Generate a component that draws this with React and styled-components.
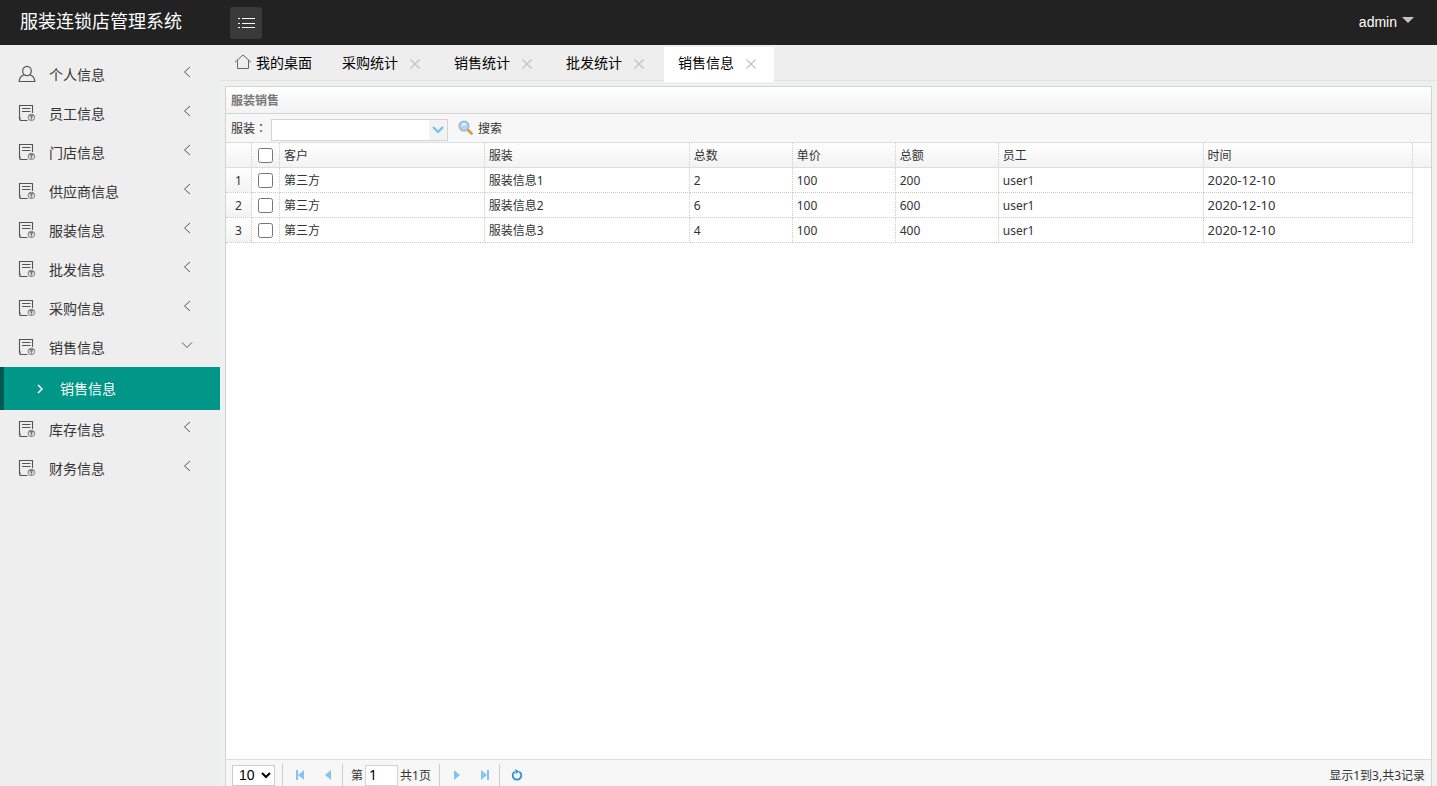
import React, { useState } from 'react';
import styled, { createGlobalStyle, css } from 'styled-components';

const menus = [
  { name: '个人信息', icon: 'user' },
  { name: '员工信息' },
  { name: '门店信息' },
  { name: '供应商信息' },
  { name: '服装信息' },
  { name: '批发信息' },
  { name: '采购信息' },
  { name: '销售信息', children: ['销售信息'] },
  { name: '库存信息' },
  { name: '财务信息' },
];

const tabs = ['采购统计', '销售统计', '批发统计', '销售信息'];

const rows = [
  { customer: '第三方', clothes: '服装信息1', count: 2, price: 100, total: 200, staff: 'user1', date: '2020-12-10' },
  { customer: '第三方', clothes: '服装信息2', count: 6, price: 100, total: 600, staff: 'user1', date: '2020-12-10' },
  { customer: '第三方', clothes: '服装信息3', count: 4, price: 100, total: 400, staff: 'user1', date: '2020-12-10' },
];

const UserIcon = () => (
  <svg width="18" height="18" viewBox="0 0 18 18" fill="none" stroke="#555" strokeWidth="1.2">
    <ellipse cx="9" cy="6" rx="4.3" ry="4.7" />
    <path d="M6.2 9.8C3 10.8 1.4 13 1.2 16.5H16.8C16.6 13 15 10.8 11.8 9.8" />
  </svg>
);

const FileIcon = () => (
  <svg width="18" height="18" viewBox="0 0 18 18" fill="none" stroke="#555" strokeWidth="1.1">
    <path d="M9.5 16.5H3.5Q1.5 16.5 1.5 14.5V1.5H14.5V9" />
    <path d="M4 4.5H12.5M4 7.5H12.5" />
    <path d="M1.5 14H3" strokeWidth="0.8" />
    <ellipse cx="13.4" cy="13.4" rx="3.3" ry="3.1" strokeWidth="1" stroke="#777" />
    <path d="M11.4 11.5H15.4M11.6 13H15.2M13.4 12V15.8" strokeWidth="1" stroke="#777" />
  </svg>
);

const HomeIcon = () => (
  <svg width="18" height="16" viewBox="0 0 18 16" fill="none" stroke="#666" strokeWidth="1">
    <path d="M1 8.2L9 1L17 8.2M3.5 6.2V14.5H14.5V6.2" />
  </svg>
);

const ListIcon = () => (
  <svg width="18" height="12" viewBox="0 0 18 12" stroke="#fff" strokeWidth="1">
    <path d="M1 1.5H3M5 1.5H18M1 6.5H3M5 6.5H18M1 10.5H3M5 10.5H18" />
  </svg>
);

const Angle = ({ open }) => (
  <svg width="12" height="12" viewBox="0 0 12 12" fill="none" stroke="#555" strokeWidth="1">
    <path d={open ? 'M1 3.5L6 8.5L11 3.5' : 'M9 1L3.5 6L9 11'} />
  </svg>
);

const SearchIcon = () => (
  <svg width="16" height="16" viewBox="0 0 16 16">
    <path d="M10 10L13.6 13.4" stroke="#e09a3e" strokeWidth="2.8" strokeLinecap="round" />
    <path d="M9 9L10.5 10.5" stroke="#999" strokeWidth="1.5" />
    <circle cx="6" cy="6" r="4.9" fill="#a9d5fa" stroke="#a5b0ba" strokeWidth="1.2" />
    <path d="M3.2 5.6A3 3 0 0 1 8.4 4.2Q6.5 6.2 3.2 5.6Z" fill="#e6f4ff" />
  </svg>
);

const pageIcons = {
  first: 'M1 1H3V11H1ZM9 1V11L3 6Z',
  prev: 'M8 1V11L2 6Z',
  next: 'M2 1V11L8 6Z',
  last: 'M1 1V11L7 6ZM7 1H9V11H7Z',
};

const PageButton = ({ type, label }) => (
  <IconButton type="button" aria-label={label}>
    <svg width="10" height="12" viewBox="0 0 10 12" fill="#85c4f0">
      <path d={pageIcons[type]} />
    </svg>
  </IconButton>
);

export default function App() {
  const [page, setPage] = useState('1');
  const [checked, setChecked] = useState([]);

  const toggle = (i) => {
    setChecked(checked.includes(i) ? checked.filter((n) => n !== i) : [...checked, i]);
  };

  const toggleAll = () => {
    setChecked(checked.length === rows.length ? [] : rows.map((_, i) => i));
  };

  return (
    <Page>
      <GlobalStyle />
      <Header>
        <Logo href="#">服装连锁店管理系统</Logo>
        <MenuToggle type="button" aria-label="菜单"><ListIcon /></MenuToggle>
        <Account type="button">admin<Caret /></Account>
      </Header>
      <Body>
        <Sidebar>
          {menus.map((menu) => (
            <React.Fragment key={menu.name}>
              <MenuItem href="#">
                {menu.icon === 'user' ? <UserIcon /> : <FileIcon />}
                <MenuName>{menu.name}</MenuName>
                <MenuArrow><Angle open={!!menu.children} /></MenuArrow>
              </MenuItem>
              {menu.children && menu.children.map((child) => (
                <SubItem href="#" key={child}>
                  <svg width="8" height="10" viewBox="0 0 8 10" fill="none" stroke="#fff" strokeWidth="1.5">
                    <path d="M2 1L6 5L2 9" />
                  </svg>
                  <SubName>{child}</SubName>
                </SubItem>
              ))}
            </React.Fragment>
          ))}
        </Sidebar>
        <Main>
          <TabBar>
            <HomeTab href="#"><HomeIcon />我的桌面</HomeTab>
            {tabs.map((tab, i) => (
              <Tab key={tab} $active={i === tabs.length - 1}>
                <TabLink href="#">{tab}</TabLink>
                <TabClose type="button" aria-label={'关闭' + tab}>
                  <svg width="10" height="10" viewBox="0 0 10 10" stroke="#c2c2c2" strokeWidth="1.1">
                    <path d="M0.5 0.5L9.5 9.5M9.5 0.5L0.5 9.5" />
                  </svg>
                </TabClose>
              </Tab>
            ))}
          </TabBar>
          <Panel>
            <PanelTitle>服装销售</PanelTitle>
            <Toolbar>
              <label htmlFor="clothes">服装<Colon>：</Colon></label>
              <Combo>
                <ComboSelect id="clothes" defaultValue="">
                  <option value=""></option>
                  {rows.map((row) => <option key={row.clothes}>{row.clothes}</option>)}
                </ComboSelect>
                <ComboArrow>
                  <svg width="12" height="8" viewBox="0 0 12 8" fill="none" stroke="#70bff2" strokeWidth="2.2">
                    <path d="M1 1L6 6L11 1" />
                  </svg>
                </ComboArrow>
              </Combo>
              <SearchButton type="button"><SearchIcon />搜索</SearchButton>
            </Toolbar>
            <GridView>
              <Grid>
                <colgroup>
                  <Col $width="26px" />
                  <Col $width="28px" />
                  <Col $width="17%" />
                  <Col $width="17%" />
                  <Col $width="8.55%" />
                  <Col $width="8.55%" />
                  <Col $width="8.55%" />
                  <Col $width="17%" />
                  <Col />
                  <Col $width="18px" />
                </colgroup>
                <thead>
                  <tr>
                    <Th></Th>
                    <Th $center>
                      <Checkbox aria-label="全选" checked={checked.length === rows.length} onChange={toggleAll} />
                    </Th>
                    <Th>客户</Th>
                    <Th>服装</Th>
                    <Th>总数</Th>
                    <Th>单价</Th>
                    <Th>总额</Th>
                    <Th>员工</Th>
                    <Th>时间</Th>
                    <Th $blank></Th>
                  </tr>
                </thead>
                <tbody>
                  {rows.map((row, i) => (
                    <tr key={row.clothes}>
                      <NumberTd>{i + 1}</NumberTd>
                      <Td $center>
                        <Checkbox aria-label={row.clothes} checked={checked.includes(i)} onChange={() => toggle(i)} />
                      </Td>
                      <Td>{row.customer}</Td>
                      <Td>{row.clothes}</Td>
                      <Td>{row.count}</Td>
                      <Td>{row.price}</Td>
                      <Td>{row.total}</Td>
                      <Td>{row.staff}</Td>
                      <DateTd>{row.date}</DateTd>
                      <td></td>
                    </tr>
                  ))}
                </tbody>
              </Grid>
            </GridView>
            <Pager>
              <PageSize aria-label="每页记录数" defaultValue="10">
                <option>10</option>
                <option>20</option>
                <option>50</option>
              </PageSize>
              <Separator />
              <PageButton type="first" label="首页" />
              <PageButton type="prev" label="上一页" />
              <Separator />
              <PageLabel htmlFor="page">第</PageLabel>
              <PageInput id="page" value={page} onChange={(e) => setPage(e.target.value)} />
              <PageCount>共1页</PageCount>
              <Separator />
              <PageButton type="next" label="下一页" />
              <PageButton type="last" label="尾页" />
              <Separator />
              <IconButton type="button" aria-label="刷新">
                <svg width="12" height="12" viewBox="0 0 12 12">
                  <path d="M8.2 2.7A4.3 4.3 0 1 1 3.8 2.7" fill="none" stroke="#2a8fdc" strokeWidth="1.8" />
                  <path d="M4.2 0L8.2 2.4L4.8 5Z" fill="#2a8fdc" />
                </svg>
              </IconButton>
              <PagerInfo>显示1到3,共3记录</PagerInfo>
            </Pager>
          </Panel>
        </Main>
      </Body>
    </Page>
  );
}

const GlobalStyle = createGlobalStyle`
  * {
    box-sizing: border-box;
  }
  body {
    margin: 0;
    font-family: "Liberation Sans", "Noto Sans CJK SC", sans-serif;
    font-size: 14px;
    color: #333;
  }
  a {
    color: inherit;
    text-decoration: none;
  }
  button, input, select {
    font-family: inherit;
  }
  button {
    border: none;
    padding: 0;
    background: none;
    cursor: pointer;
  }
  svg {
    display: block;
    flex-shrink: 0;
  }
`;

const Page = styled.div`
  display: flex;
  flex-direction: column;
  height: 100vh;
  overflow: hidden;
`;

const Header = styled.header`
  display: flex;
  align-items: center;
  flex-shrink: 0;
  height: 45px;
  padding: 0 23px 0 20px;
  background: #222;
  color: #fff;
`;

const Logo = styled.a`
  width: 210px;
  padding-bottom: 1px;
  font-size: 18px;
  line-height: 26px;
`;

const MenuToggle = styled.button`
  display: flex;
  align-items: center;
  justify-content: center;
  width: 32px;
  height: 32px;
  border-radius: 3px;
  background: #393939;
`;

const Account = styled.button`
  display: flex;
  align-items: center;
  gap: 5px;
  margin-left: auto;
  padding-bottom: 2px;
  color: #fff;
  font-size: 14px;
`;

const Caret = styled.span`
  margin-bottom: 4px;
  border: 6px solid transparent;
  border-top-color: #c2c2c2;
  border-bottom: none;
`;

const Body = styled.div`
  display: flex;
  flex: 1;
  min-height: 0;
`;

const Sidebar = styled.nav`
  flex-shrink: 0;
  width: 220px;
  padding-top: 10px;
  background: #eee;
`;

const MenuItem = styled.a`
  display: flex;
  align-items: center;
  height: 39px;
  padding: 0 27px 2px 18px;
`;

const MenuName = styled.span`
  flex: 1;
  padding-left: 13px;
`;

const MenuArrow = styled.span`
  padding-bottom: 4px;
`;

const SubItem = styled.a`
  display: flex;
  align-items: center;
  gap: 16px;
  height: 43px;
  padding-left: 32px;
  border-left: 4px solid #005a52;
  background: #009688;
  color: #fff;
`;

const SubName = styled.span`
  padding-bottom: 2px;
`;

const Main = styled.main`
  display: flex;
  flex-direction: column;
  flex: 1;
  min-width: 0;
  background: #eef2ef;
`;

const TabBar = styled.div`
  display: flex;
  flex-shrink: 0;
  height: 36px;
  padding-top: 2px;
  border-bottom: 1px solid #e2e2e2;
  background: #eee;
  color: #000;
`;

const HomeTab = styled.a`
  display: flex;
  align-items: center;
  gap: 4px;
  height: 33px;
  padding: 0 16px 3px 14px;
`;

const Tab = styled.div`
  display: flex;
  align-items: center;
  gap: 12px;
  width: 112px;
  height: 33px;
  padding: 0 0 2px 14px;

  ${({ $active }) => $active && css`
    width: 110px;
    height: 35px;
    padding-bottom: 4px;
    background: #fff;
  `}
`;

const TabLink = styled.a`
  line-height: 20px;
`;

const TabClose = styled.button`
  padding-top: 2px;
`;

const Panel = styled.section`
  display: flex;
  flex-direction: column;
  flex: 1;
  min-height: 0;
  margin: 5px 5px 0;
  border: 1px solid #d3d3d3;
  border-bottom: none;
  background: #fff;
  font-family: "Noto Sans", "Noto Sans CJK SC", sans-serif;
  font-size: 12px;
`;

const PanelTitle = styled.h2`
  flex-shrink: 0;
  height: 27px;
  margin: 0;
  padding-left: 5px;
  border-bottom: 1px solid #d3d3d3;
  background: linear-gradient(#fff, #f3f3f3);
  color: #777;
  font-size: 12px;
  line-height: 28px;
`;

const Toolbar = styled.div`
  display: flex;
  align-items: center;
  flex-shrink: 0;
  height: 29px;
  padding: 0 5px;
  border-bottom: 1px solid #ddd;
  background: #f7f7f7;
`;

const Colon = styled.span`
  font-family: "Noto Sans CJK TC", sans-serif;
`;

const Combo = styled.div`
  position: relative;
  width: 177px;
  height: 22px;
  margin: 4px 10px 0 4px;
`;

const ComboSelect = styled.select`
  appearance: none;
  display: block;
  width: 100%;
  height: 100%;
  padding: 0 22px 0 4px;
  border: 1px solid #d3d3d3;
  border-radius: 0;
  background: #fff;
  font-size: 12px;
`;

const ComboArrow = styled.span`
  position: absolute;
  top: 1px;
  right: 1px;
  display: flex;
  align-items: center;
  justify-content: center;
  width: 18px;
  height: 20px;
  background: #f3f3f3;
  pointer-events: none;
`;

const SearchButton = styled.button`
  display: flex;
  align-items: center;
  gap: 4px;
  color: #333;
  font-size: 12px;
`;

const GridView = styled.div`
  flex: 1;
  min-height: 0;
  overflow: hidden;
`;

const Grid = styled.table`
  width: 100%;
  table-layout: fixed;
  border-collapse: separate;
  border-spacing: 0;
  line-height: 20px;
`;

const Col = styled.col`
  width: ${({ $width }) => $width || 'auto'};
`;

const Th = styled.th`
  height: 25px;
  padding: ${({ $center }) => ($center ? '0' : '2px 4px 0')};
  border-right: ${({ $blank }) => ($blank ? 'none' : '1px dotted #ccc')};
  border-bottom: 1px solid #ddd;
  background: linear-gradient(#fff, #f3f3f3);
  font-weight: normal;
  text-align: left;
`;

const Td = styled.td`
  height: 25px;
  padding: ${({ $center }) => ($center ? '0' : '2px 4px 0')};
  border-right: 1px dotted #ccc;
  border-bottom: 1px dotted #ccc;
`;

const NumberTd = styled(Td)`
  background: linear-gradient(#fff, #f3f3f3);
  text-align: center;
`;

const DateTd = styled(Td)`
  padding-top: 0;
  font-size: 13px;
`;

const Checkbox = styled.input.attrs({ type: 'checkbox' })`
  display: block;
  width: 15px;
  height: 15px;
  margin: 0 auto;
`;

const Pager = styled.div`
  display: flex;
  align-items: center;
  flex-shrink: 0;
  padding: 4px 6px 0;
  border-top: 1px solid #ddd;
  background: #f7f7f7;
`;

const PageSize = styled.select`
  width: 43px;
  height: 21px;
  padding: 0 2px;
  border: 1px solid #ccc;
  border-radius: 0;
  background: #fff;
  color: #000;
  font-family: "Liberation Sans", sans-serif;
  font-size: 14px;
`;

const Separator = styled.span`
  width: 1px;
  height: 22px;
  margin-right: 3px;
  background: #ccc;

  ${PageSize} + & {
    margin-left: 7px;
  }
`;

const IconButton = styled.button`
  display: flex;
  align-items: center;
  justify-content: center;
  width: 28px;
  height: 22px;
`;

const PageLabel = styled.label`
  padding-left: 5px;
`;

const PageInput = styled.input`
  width: 33px;
  height: 21px;
  margin: 0 2px;
  padding: 0 3px 2px;
  border: 1px solid #d3d3d3;
  color: #000;
  font-size: 14px;
`;

const PageCount = styled.span`
  padding-right: 8px;
`;

const PagerInfo = styled.span`
  margin-left: auto;
`;
